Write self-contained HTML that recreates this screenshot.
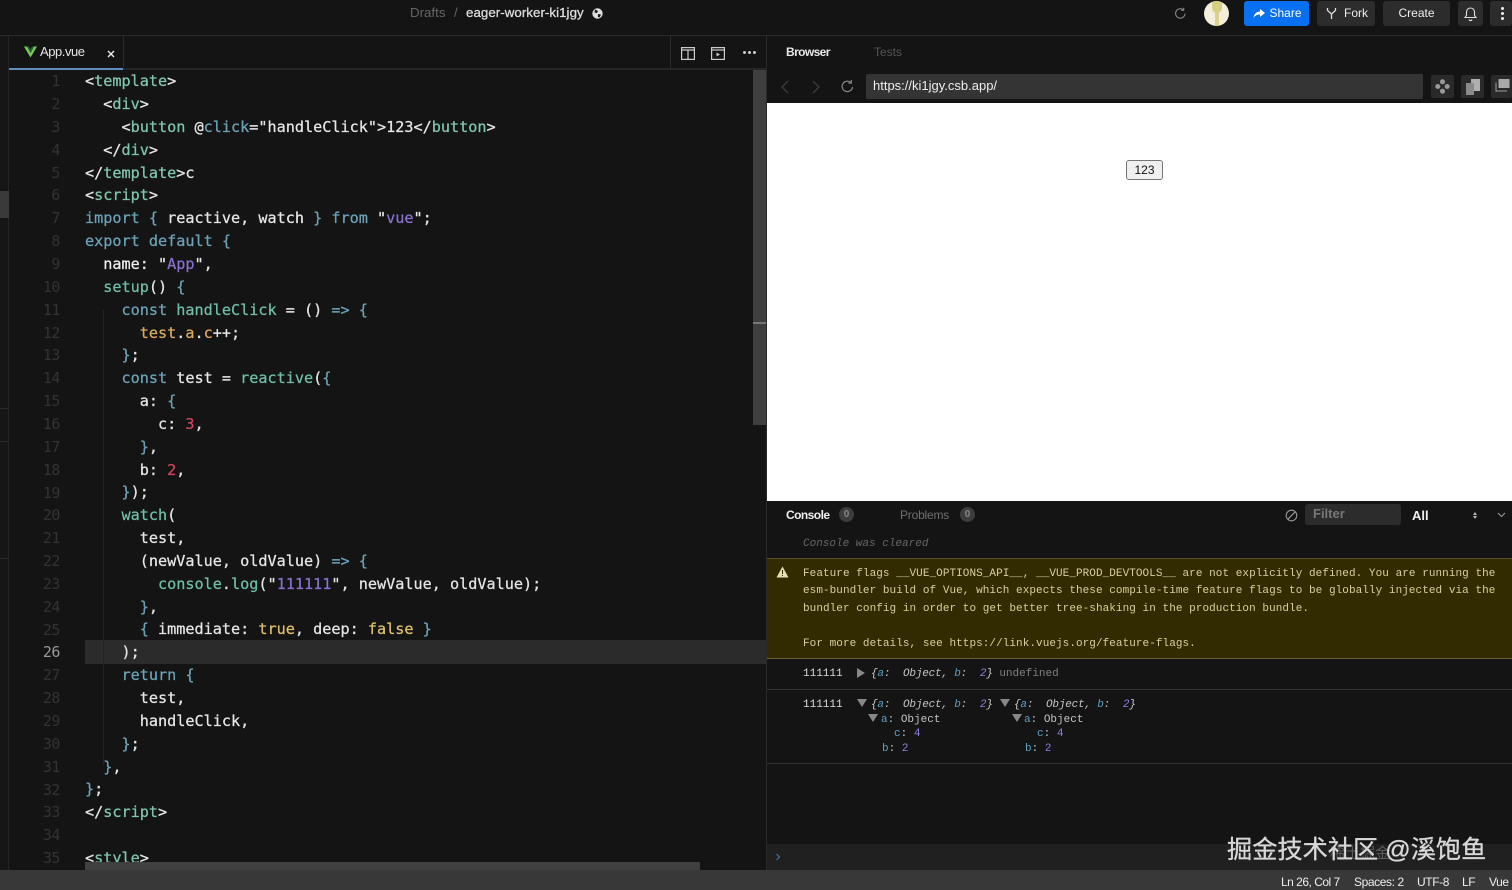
<!DOCTYPE html>
<html><head><meta charset="utf-8"><style>
html,body{margin:0;padding:0;width:1512px;height:890px;overflow:hidden;background:#141414}
*{box-sizing:border-box}
.a{position:absolute}
.t{position:absolute;white-space:pre;font-family:"Liberation Sans",sans-serif}
.ln{position:absolute;left:20px;width:40px;text-align:right;font:15px/23px "DejaVu Sans Mono",monospace;color:#333;letter-spacing:-.03em;margin-top:1px}
.cl{position:absolute;left:85px;white-space:pre;font:15.17px/23px "DejaVu Sans Mono",monospace;color:#e6e6e6;-webkit-text-stroke:.25px;margin-top:1px}
.g{color:#7fc7ac}.b{color:#6ba3b8}.c{color:#62b5b5}.w{color:#f0f0f0}.y{color:#e0c068}.p{color:#8a70d0}.r{color:#d0455f}.o{color:#dba860}.n{color:#6fbfa8}
.m{position:absolute;white-space:pre;font:11px/15px "Liberation Mono",monospace;color:#c4c4c4}
.btn{position:absolute;top:1px;height:25px;border-radius:3px;background:#2c2c2c;color:#eee;font:500 12px/25px "Liberation Sans",sans-serif;text-align:center}
i{font-style:italic;letter-spacing:-.2px}
</style></head><body>
<!-- top bar -->
<div class="a" style="left:0;top:35px;width:1512px;height:1px;background:#2c2c2c"></div>
<div class="t" style="left:410px;top:5px;font-size:13.3px;line-height:16px;color:#666">Drafts</div>
<div class="t" style="left:454px;top:5px;font-size:13px;line-height:16px;color:#666">/</div>
<div class="t" style="left:466px;top:5px;font-size:13.3px;line-height:16px;color:#ddd;letter-spacing:.05px;-webkit-text-stroke:.3px #ddd">eager-worker-ki1jgy</div>
<svg class="a" style="left:592px;top:8px" width="11" height="11" viewBox="0 0 11 11"><circle cx="5.5" cy="5.5" r="5.2" fill="#ddd"/><path d="M3 1.5L6 3 5 5 2.5 4.5zM6 6l3 .5-1.5 3-1.5-.5z" fill="#141414"/></svg>
<svg class="a" style="left:1174px;top:7px" width="13" height="13" viewBox="0 0 13 13" fill="none" stroke="#888" stroke-width="1.1"><path d="M11 6.5A4.7 4.7 0 1 1 9.5 3M9.7 .8V3.3H7.2"/></svg>
<div class="a" style="left:1204px;top:1px;width:25px;height:25px;border-radius:50%;background:#f3efdc;overflow:hidden"><div class="a" style="left:8px;top:0;width:10px;height:12px;background:#d6cf82;border-radius:2px 2px 5px 5px"></div><div class="a" style="left:11px;top:10px;width:4px;height:15px;background:#d9d38d"></div></div>
<div class="btn" style="left:1244px;width:65px;background:#0971f1;color:#fff;padding-left:18px">Share</div>
<svg class="a" style="left:1253px;top:9px" width="12" height="10" viewBox="0 0 12 10"><path d="M7 0l5 4-5 4V5.5C4 5.5 2 6.500 .500 9 1 5 3.500 2.500 7 2.500z" fill="#fff"/></svg>
<div class="btn" style="left:1317px;width:58px;padding-left:20px">Fork</div>
<svg class="a" style="left:1326px;top:7px" width="11" height="13" viewBox="0 0 11 13" fill="none" stroke="#ddd" stroke-width="1.3"><path d="M1.500 1v2.500L5.500 7l4-3.500V1M5.500 7v5"/></svg>
<div class="btn" style="left:1383px;width:67px">Create</div>
<div class="btn" style="left:1458px;width:25px"></div>
<svg class="a" style="left:1464px;top:6px" width="13" height="16" viewBox="0 0 13 16" fill="none" stroke="#ddd" stroke-width="1.1"><path d="M1 11.500h11L10.500 9.500V6A4 4 0 0 0 2.500 6v3.500zM5 13.500a1.600 1.600 0 0 0 3 0"/></svg>
<div class="btn" style="left:1490px;width:22px"></div>
<div class="a" style="left:1501px;top:7px;width:3px;height:3px;background:#eee;border-radius:50%;box-shadow:0 5px 0 #eee,0 10px 0 #eee"></div>

<!-- left sidebar strip -->
<div class="a" style="left:0;top:36px;width:9px;height:834px;background:#161616;border-right:1px solid #242424"></div>
<div class="a" style="left:0;top:191px;width:9px;height:27px;background:#3a3a3a"></div>
<div class="a" style="left:0;top:408px;width:9px;height:1px;background:#2c2c2c"></div>
<div class="a" style="left:0;top:441px;width:9px;height:1px;background:#2c2c2c"></div>
<div class="a" style="left:0;top:558px;width:9px;height:1px;background:#2c2c2c"></div>

<!-- tab bar -->
<div class="a" style="left:9px;top:68px;width:758px;height:2px;background:#262626"></div>
<div class="a" style="left:9px;top:68px;width:114px;height:2px;background:#5c8fc0"></div>
<div class="a" style="left:123px;top:36px;width:1px;height:32px;background:#2a2a2a"></div>
<div class="a" style="left:670px;top:36px;width:1px;height:32px;background:#2a2a2a"></div>
<div class="a" style="left:766px;top:36px;width:1px;height:36px;background:#2a2a2a"></div>
<svg class="a" style="left:24px;top:46px" width="13" height="12" viewBox="0 0 13 12"><path d="M0 .5h3L6.500 7 10 .5h3L6.500 11.500z" fill="#6fd24a"/><path d="M3 .5h2L6.500 3.500 8 .5h2L6.500 7z" fill="#2f5c40"/></svg>
<div class="t" style="left:40px;top:44px;font-size:13px;line-height:16px;color:#e6e6e6;letter-spacing:-.45px">App.vue</div>
<svg class="a" style="left:107px;top:50px" width="8" height="8" viewBox="0 0 8 8" stroke="#eee" stroke-width="1.400"><path d="M1 1l6 6M7 1L1 7"/></svg>
<svg class="a" style="left:681px;top:47px" width="14" height="13" viewBox="0 0 14 13" fill="none" stroke="#ccc" stroke-width="1.200"><rect x=".6" y=".6" width="12.800" height="11.800"/><path d="M.6 3h12.800M7 3v9.400"/></svg>
<svg class="a" style="left:711px;top:47px" width="14" height="13" viewBox="0 0 14 13" fill="none" stroke="#ccc" stroke-width="1.200"><rect x=".6" y=".6" width="12.800" height="11.800"/><path d="M.6 3h12.800"/><path d="M5.500 5.500l3.500 2-3.500 2z" fill="#ccc" stroke="none"/></svg>
<div class="a" style="left:743px;top:51px;width:3px;height:3px;background:#ccc;border-radius:50%;box-shadow:5px 0 0 #ccc,10px 0 0 #ccc"></div>

<!-- editor -->
<div class="a" style="left:753px;top:70px;width:13px;height:355px;background:#3e3e3e"></div>
<div class="a" style="left:753px;top:322px;width:13px;height:2px;background:#777"></div>
<div class="a" style="left:85px;top:640px;width:681px;height:24px;background:#2b2b2b"></div>
<div class="a" style="left:103px;top:310px;width:1px;height:456px;background:#222"></div>
<div class="a" style="left:766px;top:70px;width:1px;height:800px;background:#2a2a2a"></div>

<div class="ln" style="top:69px">1</div><div class="ln" style="top:92px">2</div><div class="ln" style="top:115px">3</div><div class="ln" style="top:138px">4</div><div class="ln" style="top:161px">5</div><div class="ln" style="top:183px">6</div><div class="ln" style="top:206px">7</div><div class="ln" style="top:229px">8</div><div class="ln" style="top:252px">9</div><div class="ln" style="top:275px">10</div><div class="ln" style="top:298px">11</div><div class="ln" style="top:321px">12</div><div class="ln" style="top:343px">13</div><div class="ln" style="top:366px">14</div><div class="ln" style="top:389px">15</div><div class="ln" style="top:412px">16</div><div class="ln" style="top:435px">17</div><div class="ln" style="top:458px">18</div><div class="ln" style="top:481px">19</div><div class="ln" style="top:503px">20</div><div class="ln" style="top:526px">21</div><div class="ln" style="top:549px">22</div><div class="ln" style="top:572px">23</div><div class="ln" style="top:595px">24</div><div class="ln" style="top:618px">25</div><div class="ln" style="top:640px;color:#999">26</div><div class="ln" style="top:663px">27</div><div class="ln" style="top:686px">28</div><div class="ln" style="top:709px">29</div><div class="ln" style="top:732px">30</div><div class="ln" style="top:755px">31</div><div class="ln" style="top:778px">32</div><div class="ln" style="top:800px">33</div><div class="ln" style="top:823px">34</div><div class="ln" style="top:846px">35</div>

<div class="cl" style="top:69px">&lt;<span class="g">template</span>&gt;</div>
<div class="cl" style="top:92px">  &lt;<span class="g">div</span>&gt;</div>
<div class="cl" style="top:115px">    &lt;<span class="g">button</span> @<span class="b">click</span>="handleClick"&gt;123&lt;/<span class="g">button</span>&gt;</div>
<div class="cl" style="top:138px">  &lt;/<span class="g">div</span>&gt;</div>
<div class="cl" style="top:161px">&lt;/<span class="g">template</span>&gt;c</div>
<div class="cl" style="top:183px">&lt;<span class="g">script</span>&gt;</div>
<div class="cl" style="top:206px"><span class="b">import</span> <span class="b">{</span> reactive, watch <span class="b">}</span> <span class="b">from</span> "<span class="p">vue</span>";</div>
<div class="cl" style="top:229px"><span class="b">export default {</span></div>
<div class="cl" style="top:252px">  <span class="w">name</span>: "<span class="p">App</span>",</div>
<div class="cl" style="top:275px">  <span class="n">setup</span>() <span class="b">{</span></div>
<div class="cl" style="top:298px">    <span class="b">const</span> <span class="n">handleClick</span> = () <span class="b">=&gt; {</span></div>
<div class="cl" style="top:321px">      <span class="o">test</span>.<span class="o">a</span>.<span class="o">c</span>++;</div>
<div class="cl" style="top:343px">    <span class="b">}</span>;</div>
<div class="cl" style="top:366px">    <span class="b">const</span> test = <span class="n">reactive</span>(<span class="b">{</span></div>
<div class="cl" style="top:389px">      a: <span class="b">{</span></div>
<div class="cl" style="top:412px">        c: <span class="r">3</span>,</div>
<div class="cl" style="top:435px">      <span class="b">}</span>,</div>
<div class="cl" style="top:458px">      b: <span class="r">2</span>,</div>
<div class="cl" style="top:480px">    <span class="b">}</span>);</div>
<div class="cl" style="top:503px">    <span class="n">watch</span>(</div>
<div class="cl" style="top:526px">      test,</div>
<div class="cl" style="top:549px">      (newValue, oldValue) <span class="b">=&gt; {</span></div>
<div class="cl" style="top:572px">        <span class="n">console</span>.<span class="n">log</span>("<span class="p">111111</span>", newValue, oldValue);</div>
<div class="cl" style="top:595px">      <span class="b">}</span>,</div>
<div class="cl" style="top:617px">      <span class="b">{</span> immediate: <span class="y">true</span>, deep: <span class="y">false</span> <span class="b">}</span></div>
<div class="cl" style="top:640px">    );</div>
<div class="cl" style="top:663px">    <span class="b">return {</span></div>
<div class="cl" style="top:686px">      test,</div>
<div class="cl" style="top:709px">      handleClick,</div>
<div class="cl" style="top:732px">    <span class="b">}</span>;</div>
<div class="cl" style="top:755px">  <span class="b">}</span>,</div>
<div class="cl" style="top:777px"><span class="b">}</span>;</div>
<div class="cl" style="top:800px">&lt;/<span class="g">script</span>&gt;</div>
<div class="cl" style="top:846px">&lt;<span class="g">style</span>&gt;</div>

<div class="a" style="left:85px;top:862px;width:615px;height:8px;background:#404040"></div>

<!-- browser panel -->
<div class="t" style="left:786px;top:44px;font-size:12px;line-height:16px;color:#e8e8e8;font-weight:bold;letter-spacing:-.6px">Browser</div>
<div class="t" style="left:874px;top:44px;font-size:12px;line-height:16px;color:#555">Tests</div>
<svg class="a" style="left:780px;top:80px" width="10" height="14" viewBox="0 0 10 14" fill="none" stroke="#3d3d3d" stroke-width="1.300"><path d="M8 1L2 7l6 6"/></svg>
<svg class="a" style="left:811px;top:80px" width="10" height="14" viewBox="0 0 10 14" fill="none" stroke="#3d3d3d" stroke-width="1.300"><path d="M2 1l6 6-6 6"/></svg>
<svg class="a" style="left:840px;top:79px" width="15" height="15" viewBox="0 0 15 15" fill="none" stroke="#888" stroke-width="1.200"><path d="M12.500 8A5.200 5.200 0 1 1 10.800 3.500M11.300 1v3H8.300"/></svg>
<div class="a" style="left:866px;top:74px;width:557px;height:25px;background:#343434;border-radius:2px"></div>
<div class="t" style="left:873px;top:78px;font-size:13px;line-height:16px;color:#eee">https://ki1jgy.csb.app/</div>
<div class="a" style="left:1431px;top:75px;width:23px;height:23px;background:#2a2a2a;border-radius:2px"></div>
<svg class="a" style="left:1435px;top:79px" width="15" height="15" viewBox="0 0 15 15" fill="#999"><circle cx="7.500" cy="2.800" r="2.500"/><circle cx="7.500" cy="12.200" r="2.500"/><circle cx="2.800" cy="7.500" r="2.500"/><circle cx="12.200" cy="7.500" r="2.500"/></svg>
<div class="a" style="left:1461px;top:75px;width:23px;height:23px;background:#2a2a2a;border-radius:2px"></div>
<svg class="a" style="left:1466px;top:79px" width="14" height="16" viewBox="0 0 14 16"><rect x="5" y="0" width="9" height="12" fill="#b0b0b0"/><rect x="0" y="4" width="8" height="12" fill="#8a8a8a"/></svg>
<div class="a" style="left:1491px;top:75px;width:21px;height:23px;background:#2a2a2a;border-radius:2px"></div>
<svg class="a" style="left:1495px;top:79px" width="15" height="14" viewBox="0 0 15 14"><rect x="3.500" y="0" width="11" height="9" fill="#a8a8a8"/><path d="M1 3.500v8.500h11" fill="none" stroke="#888" stroke-width="1.300"/></svg>

<div class="a" style="left:767px;top:103px;width:745px;height:398px;background:#fff"></div>
<div class="a" style="left:1126px;top:160px;width:37px;height:20px;background:#efefef;border:1px solid #767676;border-radius:3px;font:12px/18px 'Liberation Sans',sans-serif;color:#111;text-align:center">123</div>

<!-- console -->
<div class="a" style="left:767px;top:501px;width:745px;height:343px;background:#141414"></div>
<div class="t" style="left:786px;top:507px;font-size:12px;line-height:16px;color:#eee;font-weight:bold;letter-spacing:-.55px">Console</div>
<div class="a" style="left:839px;top:507px;width:15px;height:15px;border-radius:50%;background:#3d3d3d;color:#888;font:bold 10px/15px 'Liberation Sans',sans-serif;text-align:center">0</div>
<div class="t" style="left:900px;top:507px;font-size:12px;line-height:16px;color:#707070;letter-spacing:-.2px">Problems</div>
<div class="a" style="left:960px;top:507px;width:15px;height:15px;border-radius:50%;background:#3d3d3d;color:#888;font:bold 10px/15px 'Liberation Sans',sans-serif;text-align:center">0</div>
<svg class="a" style="left:1285px;top:509px" width="13" height="13" viewBox="0 0 13 13" fill="none" stroke="#999" stroke-width="1.100"><circle cx="6.500" cy="6.500" r="5.300"/><path d="M2.800 10.200l7.400-7.400"/></svg>
<div class="a" style="left:1305px;top:504px;width:96px;height:21px;background:#2c2c2c;border-radius:3px"></div>
<div class="t" style="left:1313px;top:506px;font-size:13px;line-height:16px;color:#777;font-weight:bold">Filter</div>
<div class="t" style="left:1412px;top:508px;font-size:13px;line-height:16px;color:#f0f0f0;font-weight:bold">All</div>
<div class="a" style="left:1473px;top:512px;border:2px solid transparent;border-bottom:3px solid #bbb;border-top:0"></div>
<div class="a" style="left:1473px;top:516px;border:2px solid transparent;border-top:3px solid #bbb;border-bottom:0"></div>
<svg class="a" style="left:1497px;top:512px" width="9" height="6" viewBox="0 0 9 6" fill="none" stroke="#999" stroke-width="1.100"><path d="M1 1l3.500 3.500L8 1"/></svg>

<div class="m" style="left:803px;top:537px;color:#666"><i style="letter-spacing:0">Console was cleared</i></div>

<div class="a" style="left:767px;top:558px;width:745px;height:101px;background:#332b00;border-top:1px solid #5c5020;border-bottom:1px solid #6b5f28"></div>
<svg class="a" style="left:776px;top:566px" width="13" height="12" viewBox="0 0 13 12"><path d="M6.500 .5L12.500 11.500H.5z" fill="#e8dfb0"/><path d="M6 4h1v4H6zM6 9h1v1H6z" fill="#332b00"/></svg>
<div class="m" style="left:803px;top:566px;color:#d8cfa0;line-height:17.400px;letter-spacing:.057px">Feature flags __VUE_OPTIONS_API__, __VUE_PROD_DEVTOOLS__ are not explicitly defined. You are running the
esm-bundler build of Vue, which expects these compile-time feature flags to be globally injected via the
bundler config in order to get better tree-shaking in the production bundle.

For more details, see https://link.vuejs.org/feature-flags.</div>

<div class="m" style="left:803px;top:667px;color:#ddd">111111</div>
<svg class="a" style="left:857px;top:668px" width="9" height="10"><path d="M0 0l8 5-8 5z" fill="#888"/></svg>
<div class="m" style="left:871px;top:667px"><i><span style="color:#ccc">{</span><span style="color:#5b9fc0">a</span>:  <span style="color:#c4c4c4">Object</span>, <span style="color:#5b9fc0">b</span>:  <span style="color:#8a80e0">2</span><span style="color:#ccc">}</span></i> <span style="color:#808080">undefined</span></div>
<div class="a" style="left:767px;top:689px;width:745px;height:1px;background:#333"></div>

<div class="m" style="left:803px;top:698px;color:#ddd">111111</div>
<svg class="a" style="left:857px;top:699px" width="10" height="9"><path d="M0 0h10L5 8z" fill="#888"/></svg>
<div class="m" style="left:871px;top:698px"><i><span style="color:#ccc">{</span><span style="color:#5b9fc0">a</span>:  <span style="color:#c4c4c4">Object</span>, <span style="color:#5b9fc0">b</span>:  <span style="color:#8a80e0">2</span><span style="color:#ccc">}</span></i></div>
<svg class="a" style="left:1000px;top:699px" width="10" height="9"><path d="M0 0h10L5 8z" fill="#888"/></svg>
<div class="m" style="left:1014px;top:698px"><i><span style="color:#ccc">{</span><span style="color:#5b9fc0">a</span>:  <span style="color:#c4c4c4">Object</span>, <span style="color:#5b9fc0">b</span>:  <span style="color:#8a80e0">2</span><span style="color:#ccc">}</span></i></div>

<svg class="a" style="left:868px;top:714px" width="10" height="9"><path d="M0 0h10L5 8z" fill="#888"/></svg>
<div class="m" style="left:881px;top:713px"><span style="color:#5b9fc0">a</span>: <span style="color:#c4c4c4">Object</span></div>
<div class="m" style="left:894px;top:727px"><span style="color:#5b9fc0">c</span>: <span style="color:#8a80e0">4</span></div>
<div class="m" style="left:882px;top:742px"><span style="color:#5b9fc0">b</span>: <span style="color:#8a80e0">2</span></div>
<svg class="a" style="left:1012px;top:714px" width="10" height="9"><path d="M0 0h10L5 8z" fill="#888"/></svg>
<div class="m" style="left:1024px;top:713px"><span style="color:#5b9fc0">a</span>: <span style="color:#c4c4c4">Object</span></div>
<div class="m" style="left:1037px;top:727px"><span style="color:#5b9fc0">c</span>: <span style="color:#8a80e0">4</span></div>
<div class="m" style="left:1025px;top:742px"><span style="color:#5b9fc0">b</span>: <span style="color:#8a80e0">2</span></div>
<div class="a" style="left:767px;top:763px;width:745px;height:1px;background:#333"></div>

<!-- console input -->
<div class="a" style="left:767px;top:844px;width:745px;height:27px;background:#202020"></div>
<svg class="a" style="left:775px;top:853px" width="6" height="8" viewBox="0 0 6 8" fill="none" stroke="#3f76a8" stroke-width="1.100"><path d="M1.500 1l3 3-3 3"/></svg>

<!-- status bar -->
<div class="a" style="left:0;top:870px;width:1512px;height:20px;background:#383838"></div>
<div class="t" style="left:1281px;top:875px;font-size:12px;line-height:14px;color:#eee;letter-spacing:-.5px">Ln 26, Col 7</div>
<div class="t" style="left:1354px;top:875px;font-size:12px;line-height:14px;color:#eee;letter-spacing:-.4px">Spaces: 2</div>
<div class="t" style="left:1417px;top:875px;font-size:12px;line-height:14px;color:#eee;letter-spacing:-.4px">UTF-8</div>
<div class="t" style="left:1462px;top:875px;font-size:12px;line-height:14px;color:#eee;letter-spacing:-.4px">LF</div>
<div class="t" style="left:1489px;top:875px;font-size:12px;line-height:14px;color:#eee;letter-spacing:-.4px">Vue</div>

<!-- watermark -->
<div class="t" style="left:1330px;top:845px;font-family:'Liberation Sans','Noto Sans CJK SC',sans-serif;font-size:15px;line-height:18px;color:#5c5c5c">稀土掘金</div>
<div class="t" style="left:1227px;top:834px;font-family:'Liberation Sans','Noto Sans CJK SC',sans-serif;font-size:25.200px;line-height:32px;color:#d8d8d8;-webkit-text-stroke:.3px #d8d8d8;text-shadow:1px 1px 1px #222">掘金技术社区 @溪饱鱼</div>
</body></html>
